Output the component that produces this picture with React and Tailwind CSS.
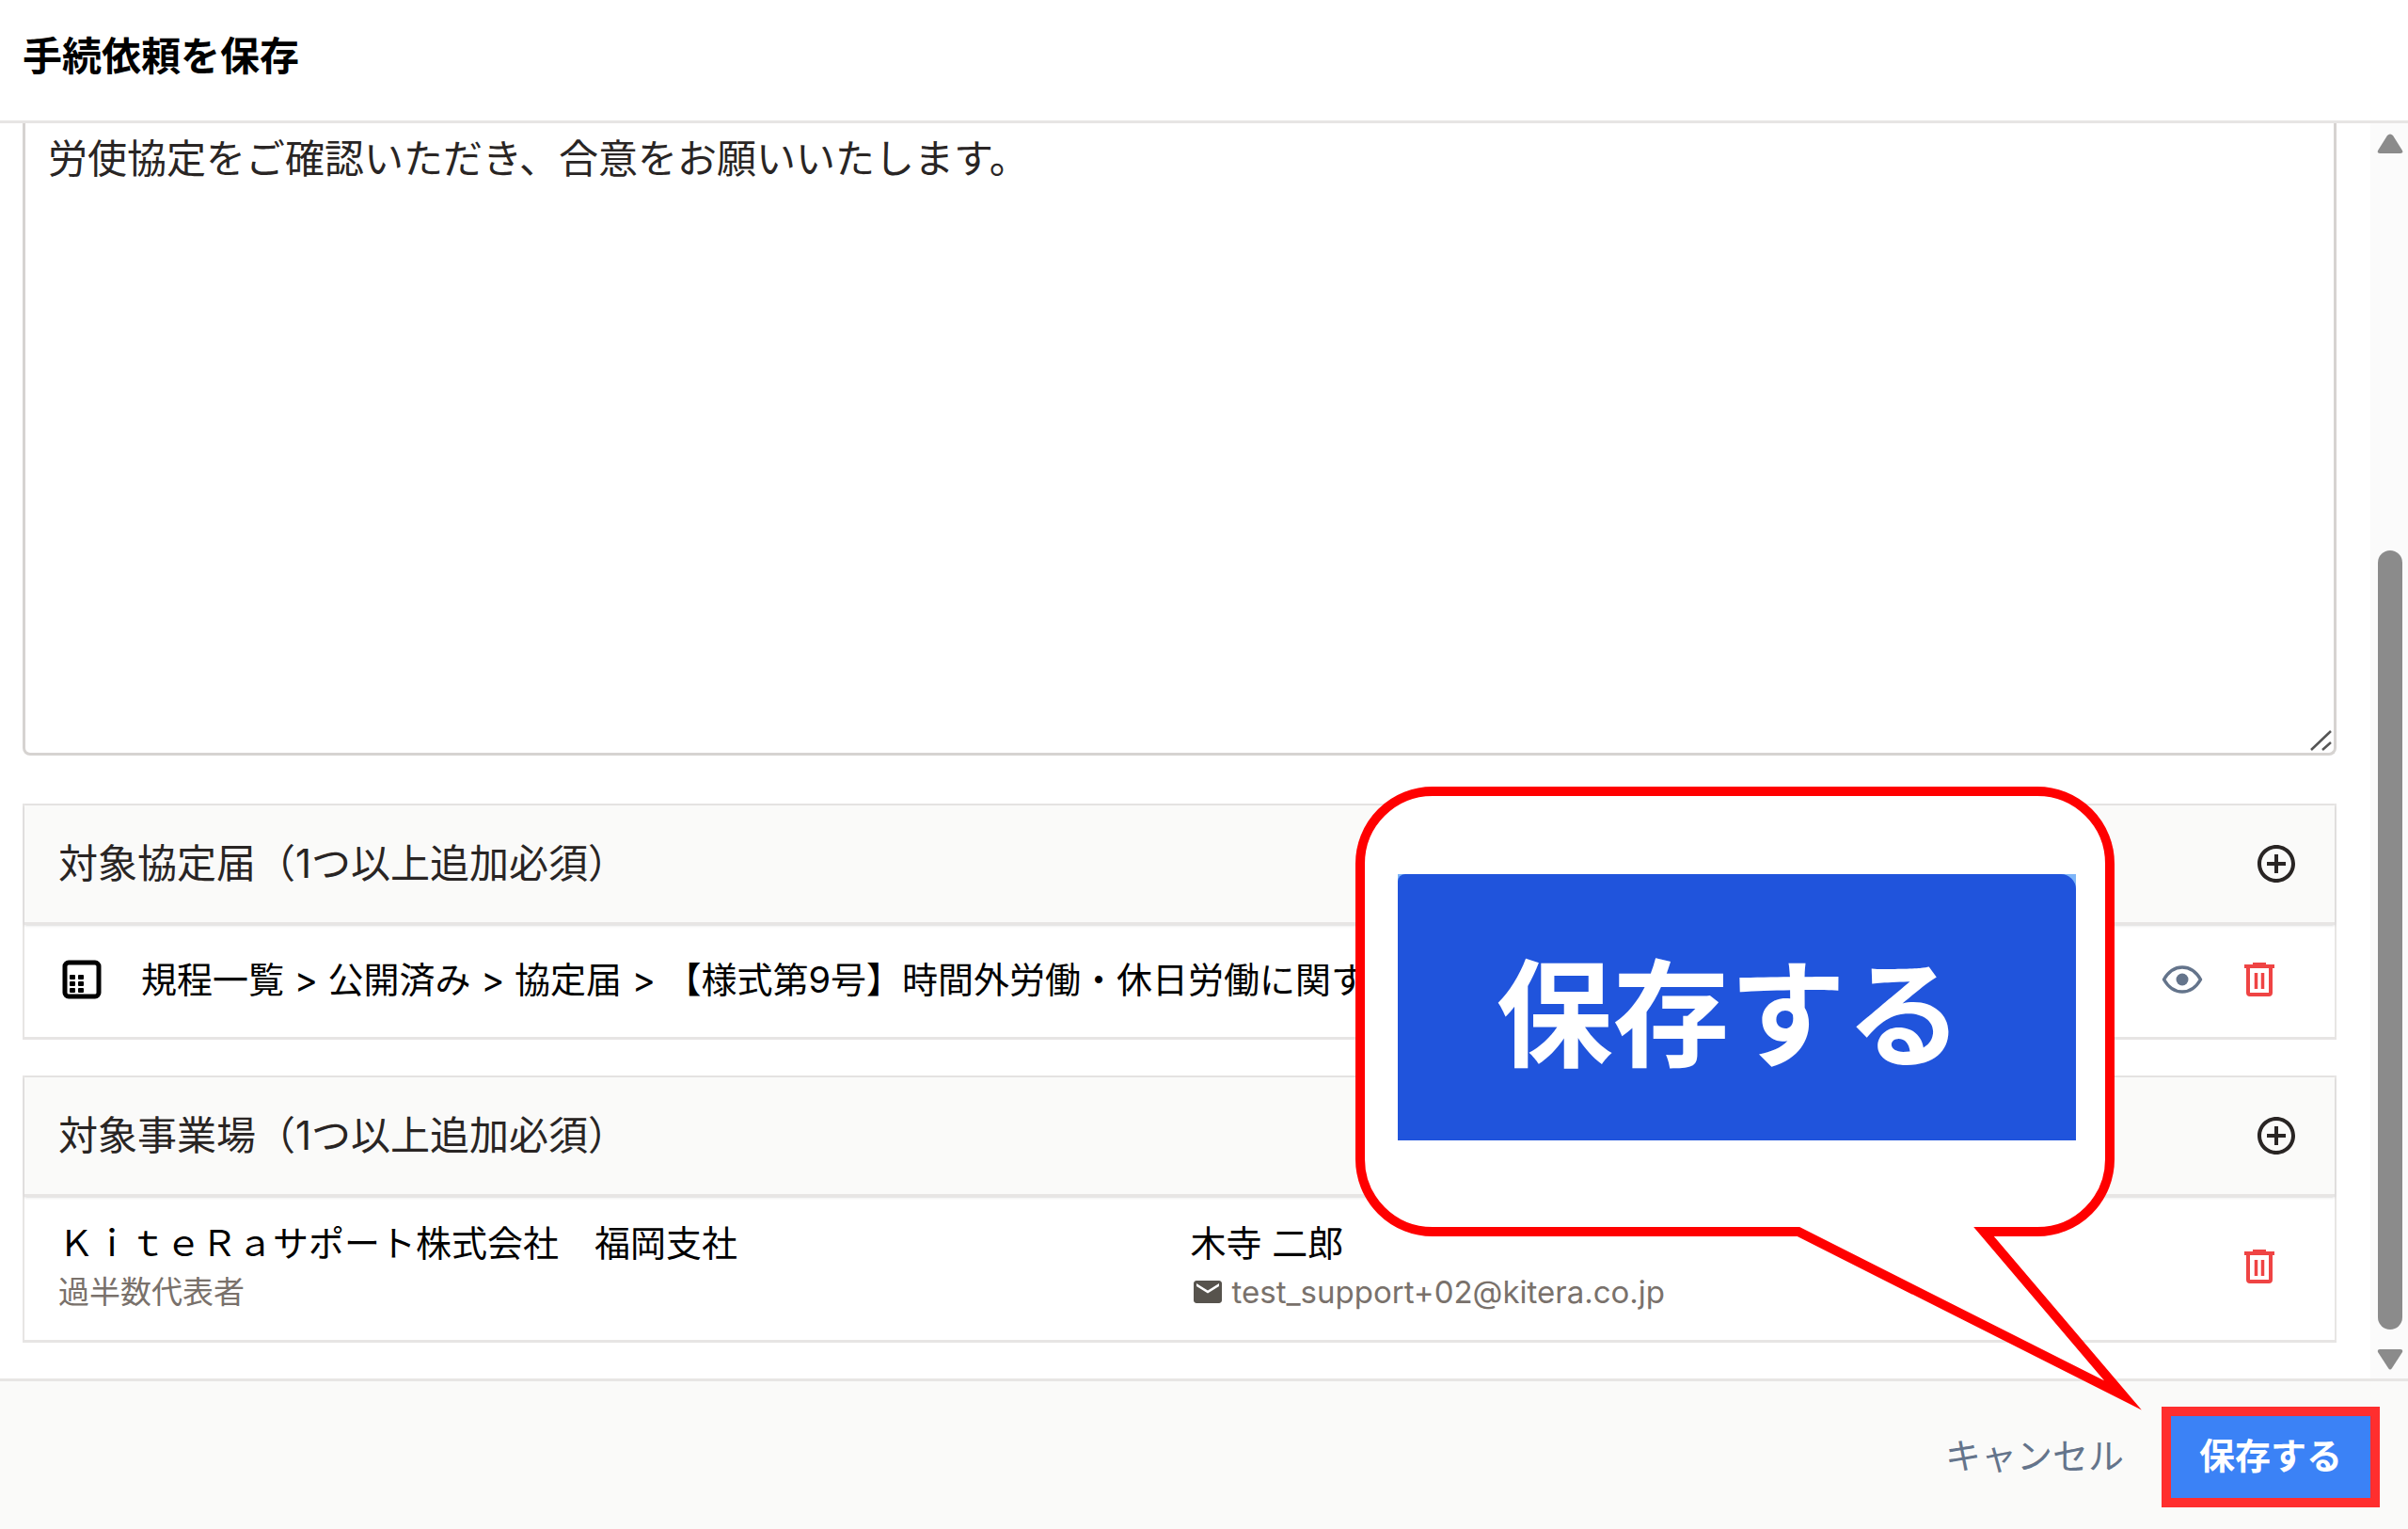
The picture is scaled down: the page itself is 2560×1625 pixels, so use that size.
import React from 'react';
import { MdAddCircleOutline, MdEmail } from 'react-icons/md';

const TrashIcon = () => (
  <svg className="size-10" viewBox="0 0 40 40" fill="none" stroke="currentColor" strokeWidth="4">
    <path d="M4 6H36M13 4H27" />
    <path d="M8 7V34Q8 36 10 36H30Q32 36 32 34V7" />
    <path d="M16.5 13V30M23.5 13V30" strokeWidth="3.5" />
  </svg>
);

const EyeIcon = () => (
  <svg className="size-12" viewBox="0 0 48 48" fill="none">
    <path d="M4.5 24Q12 11 24 11T43.5 24Q36 37 24 37T4.5 24Z" stroke="currentColor" strokeWidth="3.5" strokeLinejoin="round" />
    <circle cx="24" cy="24" r="6.5" fill="currentColor" />
  </svg>
);

const DocumentIcon = () => (
  <svg className="size-12" viewBox="0 0 48 48">
    <rect x="7" y="6" width="36" height="36" rx="4" fill="none" stroke="currentColor" strokeWidth="5" />
    {[19, 26, 33].map((y) => (
      <g key={y} fill="currentColor">
        <rect x="12" y={y} width="6" height="5" rx="1" />
        <rect x="21" y={y} width="6" height="5" rx="1" />
      </g>
    ))}
  </svg>
);

const Panel = ({ title, children }) => (
  <section className="border-2 border-b-[3px] border-stone-200 bg-white">
    <div className="flex h-[127px] items-center justify-between border-b-[3px] border-stone-200 bg-stone-50 pr-[38px] pl-9 text-stone-800 shadow-sm">
      <h2 className="text-[42px] leading-[60px]">{title}</h2>
      <button type="button" aria-label={`${title}を追加`}>
        <MdAddCircleOutline className="size-12" />
      </button>
    </div>
    <div className="flex items-center pr-15 pb-1 pl-9">{children}</div>
  </section>
);

const Callout = () => (
  <div className="pointer-events-none absolute -top-[664px] right-[250px] z-10 h-[672px] w-[844px]">
    <svg className="absolute inset-0 size-full" viewBox="0 0 844 672">
      <path
        d="M87 10H730A77 77 0 0 1 807 87V401A77 77 0 0 1 730 478H673L821 652L476 478H87A77 77 0 0 1 10 401V87A77 77 0 0 1 87 10Z"
        fill="#fff"
        stroke="#ff0000"
        strokeWidth="10"
        strokeMiterlimit="10"
      />
    </svg>
    <div className="absolute top-[98px] left-[50px] h-[283px] w-[721px] bg-[#7db5f8]">
      <div className="flex size-full items-center justify-center rounded-tl-lg rounded-tr-2xl bg-[#2054dc] pt-4 pr-4 text-[124px] leading-none font-bold text-white">
        保存する
      </div>
    </div>
  </div>
);

const Scrollbar = () => (
  <div className="flex w-10 shrink-0 flex-col items-center bg-[#fbfbfb] pt-2.5 pb-2 pl-0.5 text-[#8b8b8b]">
    <svg className="h-6 w-7" viewBox="0 0 28 24">
      <path d="M11 3Q14 0 17 3L27 19Q28 22 25 22H3Q0 22 1 19Z" fill="currentColor" />
    </svg>
    <div className="mt-[420px] w-[26px] flex-1 rounded-full bg-[#8b8b8b]" />
    <svg className="mt-5 h-6 w-7" viewBox="0 0 28 24">
      <path d="M12 21Q14 24 16 21L27 4Q28 1 25 1H3Q0 1 1 4Z" fill="currentColor" />
    </svg>
  </div>
);

export default function App() {
  return (
    <div className="flex min-h-screen flex-col bg-white font-[Inter,'Noto_Sans_CJK_JP',sans-serif] text-black">
      <header className="flex h-[131px] items-center border-b-[3px] border-stone-200 px-6 pb-2">
        <h1 className="text-[42px] leading-[60px] font-bold">手続依頼を保存</h1>
      </header>

      <main className="flex">
        <div className="min-w-0 flex-1 pr-9 pb-[38px] pl-6">
          <div className="relative">
            <textarea
              aria-label="依頼内容"
              className="block h-[672px] w-full resize-none rounded-b-lg border-[3px] border-t-0 border-stone-300 px-6 pt-2 text-[42px] leading-[60px] text-stone-800 outline-none"
              defaultValue="労使協定をご確認いただき、合意をお願いいたします。"
            />
            <svg className="absolute right-1 bottom-1 size-6" viewBox="0 0 24 24" fill="none" stroke="#555" strokeWidth="2.5">
              <path d="M1 22L22 2M13 22L22 14" />
            </svg>
          </div>

          <div className="mt-[51px] flex flex-col gap-[38px]">
            <Panel title="対象協定届（1つ以上追加必須）">
              <div className="flex h-[115px] min-w-0 flex-1 items-center">
                <DocumentIcon />
                <p className="ml-10 min-w-0 flex-1 truncate text-[38px] leading-[54px]">
                  規程一覧 &gt; 公開済み &gt; 協定届 &gt; 【様式第9号】時間外労働・休日労働に関する協定届
                </p>
                <button type="button" aria-label="表示" className="mr-[38px] text-[#64748b]">
                  <EyeIcon />
                </button>
                <button type="button" aria-label="協定届を削除" className="text-[#ef4444]">
                  <TrashIcon />
                </button>
              </div>
            </Panel>

            <Panel title="対象事業場（1つ以上追加必須）">
              <div className="flex h-[148px] min-w-0 flex-1 items-center">
                <div className="w-[51%]">
                  <p className="text-[38px] leading-[54px]">ＫｉｔｅＲａサポート株式会社　福岡支社</p>
                  <p className="text-[33px] leading-[50px] text-stone-500">過半数代表者</p>
                </div>
                <div className="flex-1">
                  <p className="text-[38px] leading-[54px]">木寺 二郎</p>
                  <p className="flex items-center gap-2 text-[33px] leading-[50px] text-stone-500">
                    <MdEmail className="size-9 text-stone-600" />
                    test_support+02@kitera.co.jp
                  </p>
                </div>
                <button type="button" aria-label="事業場を削除" className="text-[#ef4444]">
                  <TrashIcon />
                </button>
              </div>
            </Panel>
          </div>
        </div>
        <Scrollbar />
      </main>

      <footer className="relative flex flex-1 items-center justify-end gap-10 border-t-[3px] border-stone-200 bg-stone-50 pt-1 pr-[30px]">
        <button type="button" className="pb-1 text-[38px] leading-[54px] text-[#64748b]">
          キャンセル
        </button>
        <div className="relative">
          <button
            type="button"
            className="block h-[107px] border-[10px] border-[#ff2e2e] bg-[#3b82f6] px-[30px] pb-1 text-[38px] leading-[54px] font-bold text-white"
          >
            保存する
          </button>
          <Callout />
        </div>
      </footer>
    </div>
  );
}
